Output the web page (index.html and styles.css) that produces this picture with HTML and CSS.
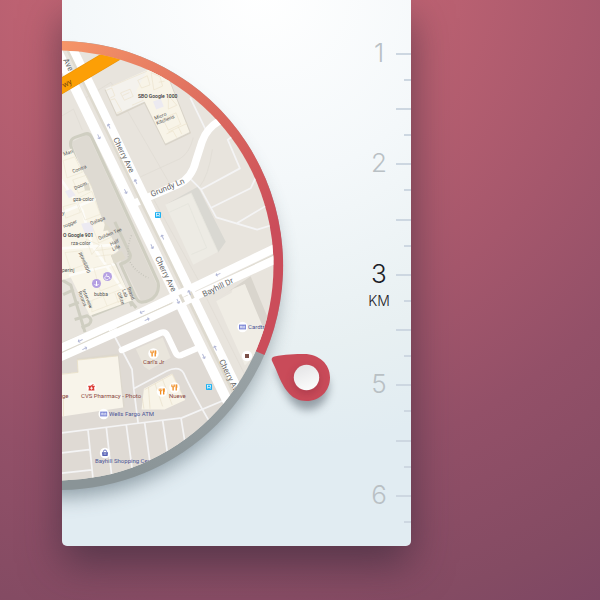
FILE: index.html
```html
<!DOCTYPE html>
<html lang="en">
<head>
<meta charset="utf-8">
<title>Distance picker</title>
<link rel="stylesheet" href="styles.css">
</head>
<body>
<main class="card">
  <svg class="dial" viewBox="62 0 290 546" role="img" aria-label="Map radius">
    <defs>
      <clipPath id="disc"><circle cx="58.5" cy="265.5" r="215"/></clipPath>
      <linearGradient id="arc" gradientUnits="userSpaceOnUse" x1="62" y1="40" x2="262" y2="240">
        <stop offset="0" stop-color="#f69668"/>
        <stop offset="0.55" stop-color="#dc6a5e"/>
        <stop offset="1" stop-color="#cb4d5a"/>
      </linearGradient>
      <linearGradient id="rest" gradientUnits="userSpaceOnUse" x1="262" y1="355" x2="140" y2="480">
        <stop offset="0" stop-color="#9aa3a6"/>
        <stop offset="1" stop-color="#8a9497"/>
      </linearGradient>
      <linearGradient id="knob" x1="0" y1="0" x2="0.4" y2="1">
        <stop offset="0" stop-color="#e2e2e4"/>
        <stop offset="1" stop-color="#fafafa"/>
      </linearGradient>
      <filter id="soft" x="-30%" y="-30%" width="160%" height="160%"><feGaussianBlur stdDeviation="10"/></filter>
      <filter id="pinshade" x="-50%" y="-50%" width="200%" height="220%"><feGaussianBlur stdDeviation="4"/></filter>
      <g id="arrow" fill="none" stroke="#b3b8d6" stroke-width="2.4"><path d="M-6.5 0H6.5M-6.5 0L-2 -4M-6.5 0L-2 4"/></g>
      <g id="fork" stroke="#f08a1d" fill="none">
        <circle r="5.2" fill="#fff" stroke="none"/>
        <path stroke-width="1.3" d="M-1.4 -0.5V3M1.7 -3V3"/>
        <path stroke-width="0.8" d="M-2.8 -3V-0.8H0V-3M-1.4 -3V-0.8M2.4 -3V0.3"/>
      </g>
      <g id="atm">
        <circle r="5.2" fill="#fff"/>
        <rect x="-3.5" y="-2.4" width="7" height="4.8" fill="#7c86d6"/>
        <path d="M-2 1.3V-1L-1 -1V1.3M0.2 -1.2V1.4M1.2 1.4V-0.8H2.2V1.4" stroke="#fff" stroke-width="0.6" fill="none"/>
      </g>
      <g id="bus">
        <rect x="-3" y="-3" width="6" height="6" rx="0.8" fill="#1eb1f2"/>
        <rect x="-1.6" y="-1.8" width="3.2" height="2.4" fill="none" stroke="#fff" stroke-width="0.7"/>
        <path d="M-1.7 1.6H-0.7M0.7 1.6H1.7" stroke="#fff" stroke-width="0.7"/>
      </g>
    </defs>

    <circle cx="60" cy="279" r="218" fill="#4a5c66" opacity="0.55" filter="url(#soft)"/>
    <circle cx="58.5" cy="265.5" r="224.5" fill="url(#rest)"/>
    <path d="M58.5 41A224.5 224.5 0 0 1 264.5 355L58.5 265.5Z" fill="url(#arc)"/>

    <g clip-path="url(#disc)">
      <g transform="scale(0.38267)" stroke-linejoin="round">
        <path fill="#e8e4dd" d="M100 80H800V1320H100Z"/>
        <path fill="#dfdad4" d="M100 960L480 790L610 1060L500 1280H100Z"/>
        <!-- hairline parcel edges -->
        <g fill="none" stroke="#dfdbd3" stroke-width="2">
          <path d="M150 310L192 285L215 340M275 365L350 525M225 255L290 215L455 500M350 470L470 415Q495 400 505 360M520 490Q545 460 555 390M640 725L500 790M540 780L650 1000M390 500L520 735L700 655M150 900L350 820"/>
        </g>
        <!-- campus loop -->
        <path fill="#dedad2" d="M186 372L230 350L350 610L415 755L400 785L370 790L300 650Z"/>
        <g fill="none" stroke="#cfcec1" stroke-width="8">
          <path d="M345 800L300 690L186 385Q180 365 196 359L222 350Q234 346 240 360L362 625L412 735Q418 752 408 770Q395 788 370 790Q360 790 352 772L315 690Q345 680 340 664L300 580"/>
          <path d="M150 725L185 745L222 868M165 770L193 757M180 800L206 790M195 835L228 825Q245 835 232 848L213 856M240 825L340 785L356 805"/>
        </g>
        <path fill="none" stroke="#c2c1b8" stroke-width="4" stroke-dasharray="2 5" d="M335 672Q332 640 345 612M340 685Q355 712 388 726"/>
        <!-- campus building -->
        <path fill="#f9f5e9" d="M150 410L186 388L240 490L265 570L310 655L290 668L345 785L235 825L185 725L150 735Z"/>
        <g fill="none" stroke="#fdfcf8" stroke-width="7"><path d="M160 470L215 550L240 640L330 770M150 560L250 520M150 650L300 640M180 720L300 690"/></g>
        <g fill="none" stroke="#ece4cf" stroke-width="1.5">
          <path d="M165 420L195 410L215 450L175 465ZM190 470L225 458L240 490L205 505ZM200 520L240 500L262 560L222 575ZM165 540L200 530L210 555L172 570ZM240 590L270 575L290 620L258 635ZM170 660L215 655L225 690L185 705ZM245 700L290 690L315 740L262 760ZM240 785L320 755L330 780L240 815ZM270 775L280 800M300 765L310 792M225 625L260 640L240 665ZM250 655L290 650M250 670L295 665M265 640L275 685"/>
        </g>
        <path fill="#eceaf2" d="M170 500L185 494L198 510L180 518ZM212 585L238 580L245 605L222 610Z"/>
        <path fill="#dedacc" d="M290 668L318 656L328 675L298 690ZM275 580L290 600L270 604ZM218 480L232 478L236 498L222 498Z"/>
        <!-- office block -->
        <path fill="none" stroke="#d9d4c9" stroke-width="4" d="M275 234L306 302L378 268L433 378L497 347L441 208"/>
        <path fill="#f4f2ed" d="M275 232L385 182L425 195L440 250L378 265L305 298Z"/>
        <path fill="#f8f4e8" d="M385 182L440 205L495 345L432 375L378 265L355 240Z"/>
        <g fill="none" stroke="#ebe2cb" stroke-width="1.6">
          <path d="M278 236L292 230L300 250L288 256M286 262L300 258L318 290L304 296M315 243L340 233L348 252L325 262ZM320 250L338 242M360 210L385 198L392 222L370 230ZM395 190L418 200L425 225L402 235ZM290 226L384 186M440 250L462 275L440 285ZM425 310L460 295L472 325L440 340ZM440 345L490 322M465 330L475 350M435 350L452 342L462 360M455 255L468 252M415 215L430 212M345 275L375 262"/>
        </g>
        <path fill="#eceaf1" d="M400 265L420 258L428 278L408 286Z"/>
        <!-- grey halls -->
        <path fill="#d9d8d2" d="M432 535L517 488L590 632L570 660L500 503Z"/>
        <path fill="#edebe4" d="M432 535L500 505L570 658L505 692Z"/>
        <path fill="none" stroke="#e4e3db" stroke-width="2" d="M442 555L492 532L540 648L500 665M500 505L570 658"/>
        <path fill="#d9d5cd" d="M570 780L655 722L712 860L680 880L640 742L600 760Z"/>
        <path fill="#f0ede5" d="M565 787L605 765L608 755L640 742L702 890L640 955Z"/>
        <path fill="#ddd8ce" d="M200 936L310 924L326 1062L318 1068Z"/>
        <path fill="#f8f4ea" d="M202 941L308 930L322 1065L150 1090V978L204 973Z"/>
        <path fill="none" stroke="#e8dfc6" stroke-width="2" d="M162 978L204 973L202 941L308 930M166 1040V1088"/>
        <path fill="#e9e5dc" d="M355 912L425 882L446 935L390 967L376 958Z"/>
        <path fill="#f8f4e8" d="M376 1016L450 976L484 1045L430 1070H370Z"/>
        <path fill="none" stroke="#e6ddc5" stroke-width="1.6" d="M378 1018L450 978L482 1042M372 1040L376 1068M388 1012L392 1068M405 1002L425 1062M425 992L450 1058"/>
        <!-- lot lines -->
        <g fill="none" stroke="#f4f4f5" stroke-width="4.5">
          <path d="M150 1133L345 1108L475 1092L590 1044M230 1124L243 1250M278 1118L292 1245M330 1110L346 1230M378 1104L392 1210M425 1098L437 1180M473 1092L484 1160M150 1185L233 1175M150 1238L240 1228"/>
          <path d="M300 880L345 965L350 1020L361 1106M350 1015L435 970Q468 955 480 975Q500 1020 545 1098"/>
          <path d="M610 355L595 365L627 440L525 495M497 467L525 495L565 568L672 600L705 590M553 542L655 492L668 465M620 583L695 538M497 255L537 338"/>
        </g>
        <!-- streets -->
        <g fill="none" stroke="#fff">
          <path stroke-width="20" d="M345 534L465 482Q502 465 512 420L528 370Q540 335 575 315"/>
          <path stroke-width="16" stroke-linecap="round" d="M318 915L420 870Q432 865 438 878L458 920Q464 934 478 926L520 908"/>
        </g>
        <path fill="none" stroke="#dedacf" stroke-width="13" d="M165 100L655 1113M150 927L480 785L730 665"/>
        <g fill="none" stroke="#fff">
          <path stroke-width="26" d="M139 112L600 1060"/>
          <path stroke-width="22" d="M180 106L650 1075"/>
          <path stroke-width="22" d="M150 914L370 816L570 720L730 643"/>
          <path stroke-width="21" d="M150 937L384 834L520 770L730 673"/>
        </g>
        <path stroke="#dedacf" stroke-width="3" fill="none" d="M150 926L285 865M305 857L450 792"/>
        <path stroke="#dedacf" stroke-width="8" fill="none" d="M470 770L480 790M497 763L505 780"/>
        <path fill="none" stroke="#e8940f" stroke-width="39" d="M140 237L310 136"/>
        <path fill="none" stroke="#fc9f06" stroke-width="36" d="M140 237L310 136"/>
        <use href="#arrow" transform="translate(285 330) rotate(64)"/>
        <use href="#arrow" transform="translate(355 475) rotate(64)"/>
        <use href="#arrow" transform="translate(425 620) rotate(64)"/>
        <use href="#arrow" transform="translate(495 765) rotate(64)"/>
        <use href="#arrow" transform="translate(563 910) rotate(64)"/>
        <use href="#arrow" transform="translate(258 357) rotate(244)"/>
        <use href="#arrow" transform="translate(328 500) rotate(244)"/>
        <use href="#arrow" transform="translate(397 644) rotate(244)"/>
        <use href="#arrow" transform="translate(465 787) rotate(244)"/>
        <use href="#arrow" transform="translate(532 931) rotate(244)"/>
        <use href="#arrow" transform="translate(570 717) rotate(-25)"/>
        <use href="#arrow" transform="translate(372 815) rotate(-25)"/>
        <use href="#arrow" transform="translate(210 890) rotate(-25)"/>
        <use href="#arrow" transform="translate(384 835) rotate(155)"/>
        <use href="#arrow" transform="translate(221 911) rotate(155)"/>
      </g>

      <use href="#bus" x="158" y="215"/>
      <use href="#bus" x="209" y="387"/>
      <use href="#fork" x="153.5" y="353.5"/>
      <use href="#fork" x="162" y="391.5"/>
      <use href="#fork" x="174.5" y="387.5"/>
      <use href="#atm" x="242.5" y="327"/>
      <use href="#atm" x="103.7" y="414"/>
      <g transform="translate(105 453)">
        <circle r="5.2" fill="#fff"/>
        <path d="M-3 -0.8H3L2.6 3H-2.6Z" fill="#5560b5"/>
        <path d="M-1.6 -0.8V-1.4A1.6 1.6 0 0 1 1.6 -1.4V-0.8" fill="none" stroke="#5560b5" stroke-width="0.8"/>
        <path d="M-1.4 1H1.4" stroke="#fff" stroke-width="0.7"/>
      </g>
      <g transform="translate(91.5 387.5)">
        <circle r="5" fill="#fff" opacity="0.7"/>
        <path d="M-3.2 -1.8H3.2V-0.6L2.5 0L3 3H-3L-2.5 0L-3.2 -0.6ZM-0.8 -2L1.8 -3.6L2.2 -3L0.8 -1.8Z" fill="#dc3b35"/>
        <path d="M0 -0.8V2.2M-1.5 0.7H1.5" stroke="#fff" stroke-width="0.8"/>
      </g>
      <circle cx="247" cy="356" r="5.2" fill="#fff"/>
      <rect x="245" y="354" width="4" height="4" fill="#7b5048"/>
      <circle cx="96.5" cy="283.5" r="4.5" fill="#b5a0e2"/>
      <path d="M96.5 281V286M94.5 284L96.5 286L98.5 284" stroke="#fff" stroke-width="1" fill="none"/>
      <circle cx="107.5" cy="276.5" r="4.5" fill="#b5a0e2"/>
      <path d="M106.7 273.8V276.5H109L110 279M105.8 276A2 2 0 1 0 108.6 278.6" stroke="#fff" stroke-width="0.8" fill="none"/>

      <g class="street">
        <text transform="translate(63 60) rotate(64)">Ave</text>
        <text transform="translate(113 139) rotate(64)">Cherry Ave</text>
        <text transform="translate(155 258) rotate(64)">Cherry Ave</text>
        <text transform="translate(219 361) rotate(64)">Cherry Ave</text>
        <text transform="translate(152 197) rotate(-23)">Grundy Ln</text>
        <text transform="translate(204 297) rotate(-26)">Bayhill Dr</text>
        <text class="highway" transform="translate(64 88) rotate(-28)">wy</text>
      </g>
      <g class="room">
        <text class="strong" x="138" y="98">SBO Google 1000</text>
        <text transform="translate(155 120) rotate(-22)">Micro</text>
        <text transform="translate(157 125) rotate(-22)">Kitchens</text>
        <text transform="translate(64 156) rotate(-20)">Man</text>
        <text transform="translate(73 173) rotate(-20)">Contra</text>
        <text transform="translate(75 190) rotate(-25)">Doom</text>
        <text x="73" y="201">gza-color</text>
        <text x="62" y="215">y</text>
        <text transform="translate(64 228) rotate(-22)">rogger</text>
        <text transform="translate(91 225) rotate(-22)">Galaga</text>
        <text class="strong" x="63" y="237">O Google 901</text>
        <text x="71" y="245">rza-color</text>
        <text transform="translate(99 240) rotate(-22)">Golden Tee</text>
        <text transform="translate(111 246) rotate(-25)">Half</text>
        <text transform="translate(113 251) rotate(-25)">Life</text>
        <text transform="translate(79 253) rotate(68)">ppnell000</text>
        <text x="62" y="272">perinj</text>
        <text x="94" y="296">bubba</text>
        <text transform="translate(82 290) rotate(68)">Interview</text>
        <text transform="translate(78 292) rotate(68)">Rooms</text>
        <text transform="translate(127 288) rotate(68)">Brand</text>
        <text transform="translate(122 290) rotate(68)">Lab</text>
        <text transform="translate(117 293) rotate(68)">Office</text>
      </g>
      <g class="place">
        <text x="143" y="364">Carl's Jr</text>
        <text x="169" y="398">Nueve</text>
        <text x="81" y="398">CVS Pharmacy - Photo</text>
        <text x="62" y="398">ge</text>
        <text class="blue" x="109" y="416">Wells Fargo ATM</text>
        <text class="blue" x="95" y="463">Bayhill Shopping Center</text>
        <text class="blue" x="248" y="329">Cardtronics</text>
      </g>
    </g>

    <path d="M275 369C285 366 325 366 329 384C329 402 318 410 306 410C292 408 286 396 275 369Z" fill="#54606a" opacity="0.55" filter="url(#pinshade)"/>
    <path d="M271.8 360.5Q271 357.6 274.5 356.6C284 354.4 296 354 304 354C319 354 330 364 330 377.5C330 391 320 401 306.5 401C292 401 285 390 279.5 378Q276 369 271.8 360.5Z" fill="#c94b59"/>
    <circle cx="306.5" cy="381" r="13" fill="#8d2c3c" opacity="0.45" filter="url(#pinshade)"/>
    <circle cx="306.5" cy="377.5" r="12.7" fill="url(#knob)"/>
  </svg>

  <ol class="scale">
    <li><span>1</span></li>
    <li></li>
    <li><span>2</span></li>
    <li></li>
    <li class="current"><span>3</span><small>KM</small></li>
    <li></li>
    <li><span>5</span></li>
    <li></li>
    <li><span>6</span></li>
  </ol>
</main>
</body>
</html>
```
FILE: styles.css
```css
* {
  box-sizing: border-box;
}

body {
  margin: 0;
  min-height: 100vh;
  padding: 0 189px 54px 62px;
  overflow: hidden;
  font-family: Roboto, "Liberation Sans", sans-serif;
  background: radial-gradient(circle at 220px -60px, #c96a76 0, #bd6272 209px, #a5576c 404px, #935068 538px, #844b63 690px, #7c4664 780px);
}

.card {
  display: flex;
  justify-content: space-between;
  border-radius: 0 0 5px 5px;
  background: radial-gradient(circle at 200px -10px, #ffffff 0, #f4f8fa 190px, #e8f0f2 360px, #e1ecf2 460px);
  box-shadow: 0 18px 40px rgba(50, 38, 55, 0.6);
}

.dial {
  display: block;
  flex: none;
  width: 290px;
  height: 546px;
}

.street {
  font-size: 8px;
  fill: #666;
}

.highway {
  fill: #7d4a10;
}

.room,
.place {
  font-size: 5px;
  fill: #555;
}

.strong {
  font-weight: 500;
  fill: #333;
}

.place {
  font-size: 6px;
  fill: #8a4640;
}

.blue {
  fill: #4c5596;
}

.scale {
  display: grid;
  grid-template-rows: repeat(9, minmax(0, 1fr));
  width: 48px;
  height: 497px;
  margin: 27px 0 0;
  padding: 0;
  list-style: none;
  font-family: Inter, Roboto, sans-serif;
  font-weight: 300;
}

.scale li {
  display: grid;
  grid-template-columns: 32px 16px;
  align-content: start;
  color: #b9c0c4;
  background:
    linear-gradient(#cdd7e1, #cdd7e1) right 0 top 26px / 15px 2px no-repeat,
    linear-gradient(#cdd7e1, #cdd7e1) right 0 top 52px / 7px 2px no-repeat;
}

.scale span,
.scale small {
  grid-column: 1;
  text-align: center;
}

.scale span {
  font-size: 26px;
  line-height: 52px;
}

.scale small {
  margin-top: -8px;
  font-size: 14px;
  line-height: 18px;
}

.scale .current {
  color: #1c2026;
}
```
